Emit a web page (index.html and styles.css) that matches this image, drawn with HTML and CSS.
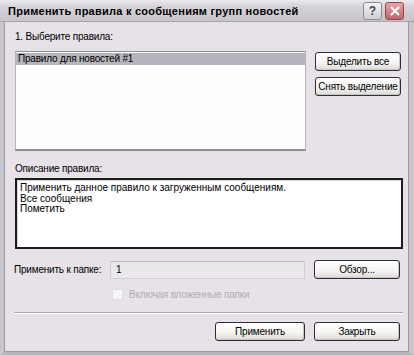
FILE: index.html
```html
<!DOCTYPE html>
<html lang="ru">
<head>
<meta charset="utf-8">
<title>Применить правила</title>
<link rel="stylesheet" href="styles.css">
</head>
<body>
<div class="window">
  <div class="titlebar">
    <span class="title">Применить правила к сообщениям групп новостей</span>
    <div class="tbtns">
      <span class="tbtn help">?</span>
      <span class="tbtn close"><svg width="12" height="12" viewBox="0 0 12 12"><path d="M2 2L10 10M10 2L2 10" stroke="#fff" stroke-width="2"/></svg></span>
    </div>
  </div>
  <div class="content">
    <div class="label first">1. Выберите правила:</div>
    <div class="row top">
      <div class="listbox">
        <div class="item sel">Правило для новостей #1</div>
      </div>
      <div class="col">
        <button class="btn side">Выделить все</button>
        <button class="btn side">Снять выделение</button>
      </div>
    </div>
    <div class="label desc-label">Описание правила:</div>
    <div class="desc">
      <div>Применить данное правило к загруженным сообщениям.</div>
      <div>Все сообщения</div>
      <div>Пометить</div>
    </div>
    <div class="row folder">
      <span class="flabel">Применить к папке:</span>
      <div class="finput">1</div>
      <button class="btn side">Обзор...</button>
    </div>
    <div class="check">
      <span class="box"></span>
      <span class="clabel">Включая вложенные папки</span>
    </div>
    <div class="sep"></div>
    <div class="row bottom">
      <button class="btn apply">Применить</button>
      <button class="btn side">Закрыть</button>
    </div>
  </div>
</div>
</body>
</html>
```
FILE: styles.css
```css
* { box-sizing: border-box; }
html, body { margin: 0; padding: 0; }
body {
  width: 414px;
  height: 355px;
  background: #e6e2e7;
  font-family: "Liberation Sans", Arial, sans-serif;
  font-size: 10px;
  color: #000;
  overflow: hidden;
  white-space: nowrap;
}
.window {
  width: 414px;
  height: 355px;
  border-left: 4px solid #c9c5cc;
  border-right: 5px solid #c9c5cc;
  border-bottom: 3px solid #b8b4bb;
  box-shadow: inset 1px 0 0 #9c98a0, inset -1px 0 0 #9c98a0, inset 0 -1px 0 #9c98a0;
  background: #e6e2e7;
  display: flex;
  flex-direction: column;
}
.titlebar {
  height: 22px;
  margin-left: -4px;
  margin-right: -5px;
  background: linear-gradient(#eceaee 0%, #d6d3d9 30%, #c7c4cb 100%);
  border-bottom: 1px solid #a9a5ad;
  display: flex;
  align-items: center;
  justify-content: space-between;
  padding: 0 8px 0 8px;
}
.title {
  font-weight: bold;
  font-size: 11px;
  letter-spacing: 0.25px;
  color: #000;
}
.tbtns { display: flex; gap: 3px; margin-right: 2px; }
.tbtn {
  width: 19px;
  height: 18px;
  border-radius: 3px;
  display: flex;
  align-items: center;
  justify-content: center;
  font-weight: bold;
  font-size: 12px;
}
.help {
  background: linear-gradient(#f4f4f4, #cfcfd3);
  border: 1px solid #8e8c92;
  color: #3b4a68;
}
.close {
  background: linear-gradient(#e7a4ab, #c3646e);
  border: 1px solid #8d4a52;
}
.content {
  padding: 8px 8px 0 11px;
  display: flex;
  flex-direction: column;
}
.label { height: 13px; line-height: 13px; letter-spacing: -0.2px; }
.first { margin-bottom: 8px; }
.row { display: flex; }
.listbox {
  width: 291px;
  height: 100px;
  background: #fdfdfd;
  border-top: 1px solid #8e8c92;
  border-left: 1px solid #b5b2b8;
  border-right: 1px solid #b5b2b8;
  border-bottom: 2px solid #8e8c92;
  padding: 1px 0 0 0;
}
.item {
  height: 12px;
  line-height: 12px;
  padding-left: 2px;
  letter-spacing: -0.2px;
}
.sel { background: #b6b4bd; }
.col {
  margin-left: 9px;
  display: flex;
  flex-direction: column;
  gap: 6px;
  padding-top: 1px;
}
.btn {
  font-family: "Liberation Sans", Arial, sans-serif;
  font-size: 10px;
  letter-spacing: -0.2px;
  white-space: nowrap;
  color: #000;
  height: 19px;
  padding: 0;
  border: 1px solid #2e2e34;
  border-radius: 3px;
  background: linear-gradient(#ffffff 0%, #f4f3f1 60%, #dcdad6 100%);
  box-shadow: inset -1px -1px 0 #c9c6c2;
}
.side { width: 86px; }
.desc-label { margin-top: 11px; margin-bottom: 3px; }
.desc {
  width: 388px;
  height: 71px;
  background: #fff;
  border: 2px solid #1c1c1c;
  box-shadow: inset 1px 1px 0 #d8d6da;
  padding: 3px 3px;
  line-height: 10.5px;
}
.folder {
  margin-top: 11px;
  align-items: center;
  height: 19px;
}
.flabel { width: 96px; margin-left: -1px; letter-spacing: -0.2px; }
.finput {
  width: 195px;
  height: 18px;
  background: #ebe8ec;
  border: 1px solid #cfccd2;
  border-top-color: #bdbac0;
  padding-left: 5px;
  line-height: 16px;
  margin-right: 9px;
}
.check {
  margin-top: 9px;
  margin-left: 97px;
  display: flex;
  align-items: center;
  height: 12px;
}
.box {
  width: 11px;
  height: 11px;
  background: #f6f5f7;
  border: 1px solid #e0dde2;
  margin-right: 6px;
}
.clabel { color: #b0adb3; font-size: 10px; letter-spacing: -0.2px; }
.sep {
  margin-top: 12px;
  width: 389px;
  margin-left: -1px;
  height: 2px;
  border-top: 1px solid #a9a6ad;
  border-bottom: 1px solid #ffffff;
}
.bottom {
  margin-top: 8px;
  justify-content: flex-end;
  gap: 9px;
  padding-right: 1px;
}
.apply { width: 90px; }
```
